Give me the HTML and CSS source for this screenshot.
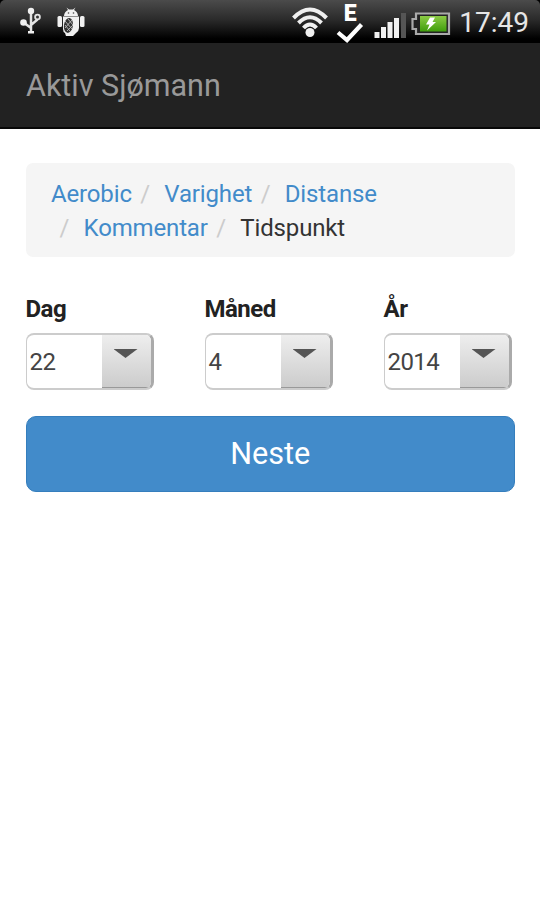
FILE: index.html
```
<!DOCTYPE html>
<html lang="no">
<head>
  <meta charset="UTF-8" />
  <meta name="viewport" content="width=device-width, initial-scale=1.0"/>
  <title>Aktiv Sjømann</title>
  <link rel="stylesheet" href="styles.css">
</head>
<body>

<div class="header">
  <div class="statusbar">
    <svg class="usb" width="22" height="28" viewBox="0 0 22 28">
      <path d="M11 4V24M11 21L3 15V14M11 18L17 13V10" fill="none" stroke="#e4e4e4" stroke-width="2.500"/>
      <circle cx="11" cy="4" r="3.200"/>
      <circle cx="3.500" cy="15.500" r="3.300"/>
      <circle cx="17.500" cy="10" r="2.400" fill="#333" stroke="#e4e4e4" stroke-width="1.800"/>
      <path d="M8 24h6v2.500H8z"/>
    </svg>
    <svg class="android" width="28" height="30" viewBox="0 0 28 30">
      <path d="M7 9C7 6 9 4 11 3L9.500 0.500L12 2.500H16L18.500 0.500L17 3C19 4 21 6 21 9Z"/>
      <path d="M6 9.500H22V21Q22 24 19 26L16 29H9L8 26Q6 25 6 22Z"/>
      <rect x="0.500" y="9" width="4.500" height="11" rx="1.500"/>
      <rect x="23" y="9" width="4.500" height="11" rx="1.500"/>
      <ellipse cx="11.500" cy="18.500" rx="4.500" ry="7.500" fill="#333" transform="rotate(8 12 18)"/>
      <path d="M8 14l7 8M8 18l5 6M11 12l5 6M15 13l-7 8M16 18l-6 6" stroke="#bbb" stroke-width="0.900"/>
      <circle cx="11.500" cy="6" r="0.800" fill="#444"/>
      <circle cx="16.500" cy="6" r="0.800" fill="#444"/>
    </svg>
    <div class="status-right">
      <svg class="wifi" width="36" height="32" viewBox="0 0 36 32">
        <g fill="none" stroke="#f0f0f0" stroke-width="4">
          <path d="M1.500 12Q18 -5 34.500 12"/>
          <path d="M6.500 17Q18 5.500 29.500 17"/>
          <path d="M11.500 22Q18 15 24.500 22"/>
        </g>
        <circle cx="18" cy="26.500" r="4.500"/>
      </svg>
      <div class="edge">
        <span>E</span>
        <svg width="28" height="21" viewBox="0 0 28 21">
          <path d="M2 10.500L11 18L25.500 2.500" fill="none" stroke="#fff" stroke-width="4.200"/>
        </svg>
      </div>
      <svg class="signal" width="33" height="28" viewBox="0 0 33 28">
        <rect x="0.500" y="20" width="5" height="6"/>
        <rect x="7" y="15" width="5" height="11"/>
        <rect x="13.500" y="10" width="5" height="16"/>
        <rect x="20" y="6" width="5" height="20"/>
        <rect x="27" y="1" width="5" height="25" fill="#555"/>
      </svg>
      <svg class="battery" width="40" height="24" viewBox="0 0 40 24">
        <defs>
          <linearGradient id="charge" x1="0" y1="0" x2="0" y2="1">
            <stop offset="0" stop-color="#8ccb45"/>
            <stop offset="1" stop-color="#3f9d0b"/>
          </linearGradient>
        </defs>
        <path d="M5 1.500H38V22H5V17H1.500V7H5Z" fill="#222" stroke="#aaa" stroke-width="2.200"/>
        <rect x="9" y="4" width="26.500" height="15.500" fill="url(#charge)"/>
        <path d="M19 5.500H24L21.500 10H25L16 18.500L18.500 12.500H15Z" fill="#fff"/>
      </svg>
      <span class="clock">17:49</span>
    </div>
  </div>

  <div class="navbar">
    <span class="navbar-brand">Aktiv Sjømann</span>
  </div>
</div>

<div class="container">
  <ol class="breadcrumb">
    <li><a href="#">Aerobic</a></li>
    <li><a href="#">Varighet</a></li>
    <li><a href="#">Distanse</a></li>
    <li><a href="#">Kommentar</a></li>
    <li class="active">Tidspunkt</li>
  </ol>

  <div class="row">
    <div class="col">
      <div class="label">Dag</div>
      <div class="select"><span>22</span><i class="arrow"></i></div>
    </div>
    <div class="col">
      <div class="label">Måned</div>
      <div class="select"><span>4</span><i class="arrow"></i></div>
    </div>
    <div class="col">
      <div class="label">År</div>
      <div class="select"><span>2014</span><i class="arrow"></i></div>
    </div>
  </div>

  <button class="btn">Neste</button>
</div>

</body>
</html>
```
FILE: styles.css
```
* {
  box-sizing: border-box;
}

body {
  margin: 0;
  background: #fff;
  color: #333;
  font-family: Roboto, sans-serif;
  font-size: 24px;
  line-height: 34px;
}

.header {
  background: #000;
}

.statusbar {
  display: flex;
  align-items: flex-start;
  height: 43px;
  padding: 0 11px 0 20px;
  background: linear-gradient(#4b4b4b, #2b2b2b 45%, #000 90%);
  border-radius: 5px 5px 0 0;
}

.statusbar svg {
  display: block;
  flex: none;
  fill: #f0f0f0;
}

.usb {
  margin-top: 7px;
}

.android {
  margin: 7px 0 0 15px;
}

.status-right {
  display: flex;
  margin-left: auto;
}

.wifi {
  margin-top: 6px;
}

.edge {
  width: 28px;
  margin: 5px 0 0 8px;
  color: #fff;
  font: 900 23px/17px Roboto, sans-serif;
  text-align: center;
}

.edge span {
  display: block;
  height: 17px;
}

.signal {
  margin: 12px 0 0 10px;
}

.battery {
  margin: 12px 0 0 4px;
}

.clock {
  margin: 6px 0 0 8px;
  color: #e6e6e6;
  font-size: 28px;
  line-height: 34px;
}

.navbar {
  height: 86px;
  padding: 26px 26px 0;
  background: #222;
  border-bottom: 2px solid #080808;
}

.navbar-brand {
  color: #999;
  font-size: 30.5px;
}

.container {
  padding: 34px 25px 0 25.5px;
}

.breadcrumb {
  display: flex;
  flex-wrap: wrap;
  height: 94px;
  margin: 0 0 35px;
  padding: 13.5px 25.5px;
  background: #f5f5f5;
  border-radius: 7px;
  list-style: none;
  letter-spacing: -0.15px;
}

.breadcrumb li + li::before {
  content: "/\00a0";
  padding: 0 8.5px;
  color: #ccc;
}

.breadcrumb a {
  color: #428bca;
  text-decoration: none;
}

.row {
  display: grid;
  grid-template-columns: repeat(3, 128px);
  column-gap: 51px;
  margin-bottom: 26px;
}

.label {
  margin-bottom: 7px;
  color: #222;
  font-weight: bold;
  letter-spacing: -0.5px;
}

.select {
  display: flex;
  justify-content: space-between;
  height: 57px;
  padding-left: 3px;
  border: 2px solid #ccc;
  border-left-width: 1px;
  border-right: 3px solid #aaa;
  border-radius: 8px;
  overflow: hidden;
  line-height: 55px;
  letter-spacing: -0.6px;
  color: #444;
}

.arrow {
  width: 49px;
  padding: 14px 0 0 12px;
  background: linear-gradient(#eee, #ccc);
  border-bottom: 1px solid #999;
}

.arrow::before {
  content: "";
  display: block;
  width: 24px;
  height: 9px;
  background: #555;
  clip-path: polygon(0 0, 100% 0, 50% 100%);
}

.btn {
  display: block;
  width: 100%;
  height: 76px;
  padding: 0 0 1px;
  border: 1.7px solid #357ebd;
  border-radius: 10px;
  background: #428bca;
  color: #fff;
  font-family: inherit;
  font-size: 30.6px;
}
```
